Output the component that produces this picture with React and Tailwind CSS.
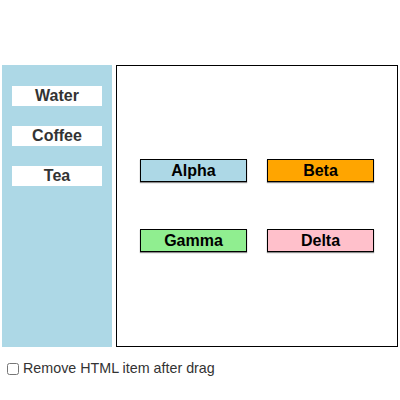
import React from "react";

const items = ["Water", "Coffee", "Tea"];

const shapes = [
  { label: "Alpha", bg: "bg-[#add8e6]", pos: "left-[23px] top-[93px]" },
  { label: "Beta", bg: "bg-[#ffa500]", pos: "left-[150px] top-[93px]" },
  { label: "Gamma", bg: "bg-[#90ee90]", pos: "left-[23px] top-[163px]" },
  { label: "Delta", bg: "bg-[#ffc0cb]", pos: "left-[150px] top-[163px]" },
];

export default function App() {
  return (
    <div className="w-[400px] h-[400px] bg-white font-['Liberation_Sans',Arial,sans-serif]">
      <div className="flex pt-[65px] pl-[2px] gap-[4px]">
        <div className="w-[110px] h-[282px] bg-[#add8e6] flex flex-col gap-[20px] pt-[21px] px-[10px]">
          {items.map((t) => (
            <div
              key={t}
              className="h-[20px] bg-white flex items-center justify-center text-[16px] leading-[18px] font-bold text-[#333]"
            >
              {t}
            </div>
          ))}
        </div>
        <div className="relative w-[282px] h-[282px] border border-black bg-white">
          {shapes.map((s) => (
            <div
              key={s.label}
              className={`absolute ${s.pos} w-[107px] h-[23px] border border-black ${s.bg} shadow-[0_1px_1px_rgba(0,0,0,0.45)] flex items-center justify-center text-[16px] leading-[18px] font-bold text-black`}
            >
              {s.label}
            </div>
          ))}
        </div>
      </div>
      <label className="flex items-center mt-[11px] pl-[7px] text-[14.3px] text-[#333]">
        <input type="checkbox" className="w-[12px] h-[12px] m-0 mr-[4px] accent-gray-400" />
        Remove HTML item after drag
      </label>
    </div>
  );
}
